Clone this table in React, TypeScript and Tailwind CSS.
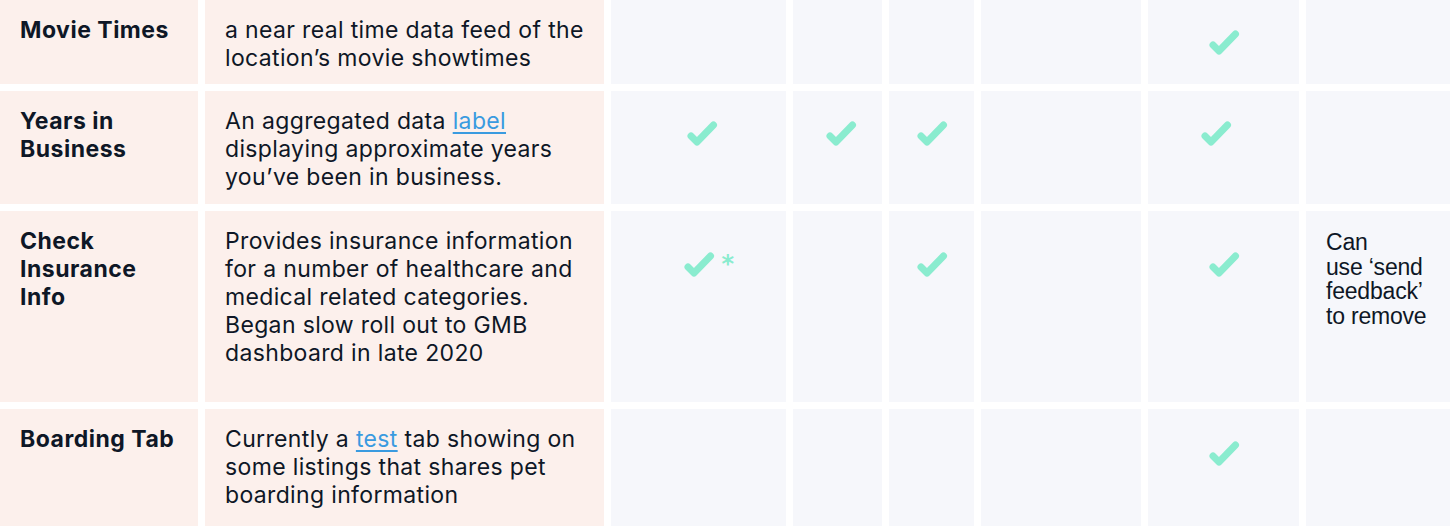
import React from "react";

const sans = "font-['Inter',sans-serif]";

type CheckProps = {
  shift?: string;
  star?: boolean;
};

const Check: React.FC<CheckProps> = ({ shift = "", star }) => (
  <div className={`relative ${shift}`}>
    <svg width="34" height="30" viewBox="0 0 34 30" fill="none" className="block">
      <polyline
        points="6,17 12,23 28.5,6"
        stroke="#8aeccf"
        strokeWidth="7"
        strokeLinecap="round"
        strokeLinejoin="round"
      />
    </svg>
    {star && (
      <span className="absolute left-full top-[2px] ml-[6px] text-[24px] leading-none font-bold text-[#8aeccf] font-['DejaVu_Sans',sans-serif]">
        *
      </span>
    )}
  </div>
);

type Row = {
  title: React.ReactNode;
  desc: React.ReactNode;
  checkTop: string;
  cells: (React.ReactNode | null)[];
};

const Link: React.FC<{ children: React.ReactNode }> = ({ children }) => (
  <a href="#" className="text-[#3a9be0] underline underline-offset-[3px] decoration-[1.5px]">
    {children}
  </a>
);

const rows: Row[] = [
  {
    title: "Movie Times",
    desc: (
      <>
        a near real time data feed of the
        <br />
        location’s movie showtimes
      </>
    ),
    checkTop: "pt-[28px]",
    cells: [null, null, null, null, <Check />, null],
  },
  {
    title: (
      <>
        Years in
        <br />
        Business
      </>
    ),
    desc: (
      <>
        An aggregated data <Link>label</Link>
        <br />
        displaying approximate years
        <br />
        you’ve been in business.
      </>
    ),
    checkTop: "pt-[28px]",
    cells: [
      <Check shift="ml-[7px]" />,
      <Check shift="ml-[7px]" />,
      <Check />,
      null,
      <Check shift="-ml-[15px]" />,
      null,
    ],
  },
  {
    title: (
      <>
        Check
        <br />
        Insurance
        <br />
        Info
      </>
    ),
    desc: (
      <>
        Provides insurance information
        <br />
        for a number of healthcare and
        <br />
        medical related categories.
        <br />
        Began slow roll out to GMB
        <br />
        dashboard in late 2020
      </>
    ),
    checkTop: "pt-[39px]",
    cells: [
      <Check star />,
      null,
      <Check />,
      null,
      <Check />,
      <div className="w-full pl-[20px] -mt-[20px] text-[23px] leading-[24.5px] tracking-[-0.2px] text-[#0e1726] font-['Liberation_Sans',Arial,sans-serif]">
        Can
        <br />
        use ‘send
        <br />
        feedback’
        <br />
        to remove
      </div>,
    ],
  },
  {
    title: "Boarding Tab",
    desc: (
      <>
        Currently a <Link>test</Link> tab showing on
        <br />
        some listings that shares pet
        <br />
        boarding information
      </>
    ),
    checkTop: "pt-[30px]",
    cells: [null, null, null, null, <Check />, null],
  },
];

export default function App() {
  return (
    <div className={`w-[1450px] h-[526px] overflow-hidden bg-white ${sans}`}>
      <div className="grid grid-cols-[198px_399px_175px_89px_85px_160px_151px_144px] grid-rows-[84px_113px_191px_140px] gap-[7px]">
        {rows.map((row, i) => (
          <React.Fragment key={i}>
            <div className="bg-[#fcf0ec] pl-[20px] pt-[16px] text-[23px] leading-[28px] tracking-[0.5px] font-bold text-[#0e1726]">
              {row.title}
            </div>
            <div className="bg-[#fcf0ec] pl-[20px] pt-[16px] text-[23px] leading-[28px] tracking-[0.35px] whitespace-nowrap text-[#0e1726]">
              {row.desc}
            </div>
            {row.cells.map((cell, j) => (
              <div
                key={j}
                className={`bg-[#f6f7fb] flex justify-center items-start ${row.checkTop}`}
              >
                {cell}
              </div>
            ))}
          </React.Fragment>
        ))}
      </div>
    </div>
  );
}
